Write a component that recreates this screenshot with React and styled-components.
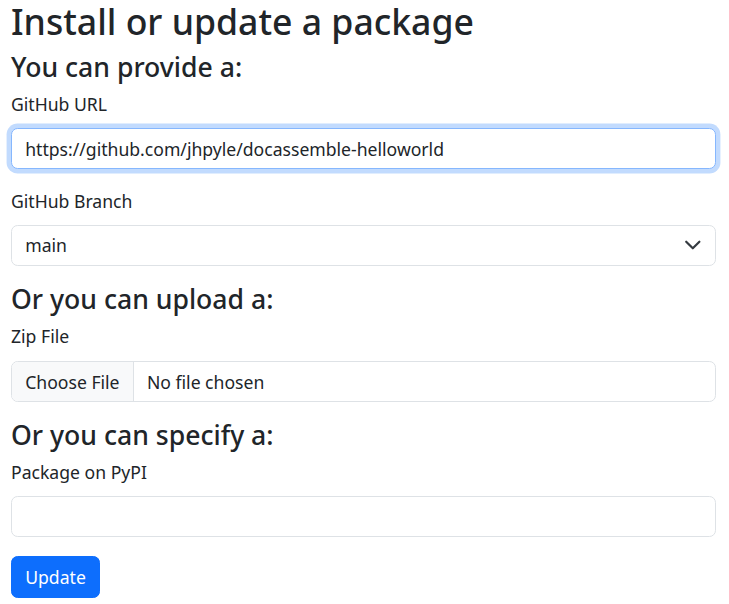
import styled, { createGlobalStyle } from 'styled-components'

const GlobalStyle = createGlobalStyle`
  *, *::before, *::after {
    box-sizing: border-box;
  }

  body {
    margin: 0;
    background: #fff;
    color: #212529;
    font-family: 'Noto Sans', 'DejaVu Sans', sans-serif;
    font-size: 17.6px;
    line-height: 1.5;
  }
`

const Page = styled.main`
  width: 729px;
  padding: 0 13px 0 11px;
`

const Title = styled.h1`
  margin: 0 0 9px;
  font-size: 35.6px;
  font-weight: 500;
  line-height: 1.2;
`

const Section = styled.h3`
  margin: 0 0 7px;
  font-size: 26.6px;
  font-weight: 500;
  line-height: 1.2;
`

const Field = styled.div`
  margin-bottom: 18.5px;
`

const Label = styled.label`
  display: block;
  margin-bottom: 11px;
`

const Input = styled.input`
  display: block;
  width: 100%;
  height: 41px;
  padding: 6.6px 13.2px;
  font: inherit;
  color: #212529;
  background: #fff;
  border: 1px solid ${({ $focused }) => ($focused ? '#86b7fe' : '#dee2e6')};
  border-radius: 6.6px;
  box-shadow: ${({ $focused }) => ($focused ? '0 0 0 4.4px rgba(13, 110, 253, 0.25)' : 'none')};
  outline: none;

  &:focus {
    border-color: #86b7fe;
    box-shadow: 0 0 0 4.4px rgba(13, 110, 253, 0.25);
  }
`

const FileInput = styled(Input)`
  overflow: hidden;

  &:focus {
    border-color: #dee2e6;
    box-shadow: none;
  }

  &::file-selector-button {
    height: 41px;
    padding: 6.6px 13.2px;
    margin: -6.6px 13.2px -6.6px -13.2px;
    font: inherit;
    color: #212529;
    background: #f8f9fa;
    border: 0;
    border-right: 1px solid #dee2e6;
    border-radius: 0;
  }
`

const SelectWrap = styled.div`
  position: relative;

  svg {
    position: absolute;
    top: 50%;
    right: 14px;
    width: 17.6px;
    height: 17.6px;
    transform: translateY(-50%);
    pointer-events: none;
  }
`

const Select = styled.select`
  display: block;
  width: 100%;
  height: 41px;
  padding: 6.6px 40px 6.6px 13.2px;
  font: inherit;
  color: #212529;
  background: #fff;
  border: 1px solid #dee2e6;
  border-radius: 6.6px;
  appearance: none;
  outline: none;
`

const Button = styled.button`
  padding: 6.6px 13.2px;
  font: inherit;
  color: #fff;
  background: #0d6efd;
  border: 1px solid #0d6efd;
  border-radius: 6.6px;
  cursor: pointer;
`

const Chevron = () => (
  <svg viewBox='0 0 16 16' fill='none' stroke='#343a40' strokeWidth='2' strokeLinecap='round' strokeLinejoin='round'>
    <path d='m2 5 6 6 6-6' />
  </svg>
)

export default function App() {
  return (
    <Page>
      <GlobalStyle />
      <Title>Install or update a package</Title>

      <Section>You can provide a:</Section>
      <Field>
        <Label htmlFor='github_url'>GitHub URL</Label>
        <Input
          id='github_url'
          type='text'
          $focused
          autoFocus
          defaultValue='https://github.com/jhpyle/docassemble-helloworld'
        />
      </Field>
      <Field>
        <Label htmlFor='branch'>GitHub Branch</Label>
        <SelectWrap>
          <Select id='branch' defaultValue='main'>
            <option value='main'>main</option>
          </Select>
          <Chevron />
        </SelectWrap>
      </Field>

      <Section>Or you can upload a:</Section>
      <Field>
        <Label htmlFor='zipfile'>Zip File</Label>
        <FileInput id='zipfile' type='file' />
      </Field>

      <Section>Or you can specify a:</Section>
      <Field>
        <Label htmlFor='pippackage'>Package on PyPI</Label>
        <Input id='pippackage' type='text' />
      </Field>

      <Button type='submit'>Update</Button>
    </Page>
  )
}
